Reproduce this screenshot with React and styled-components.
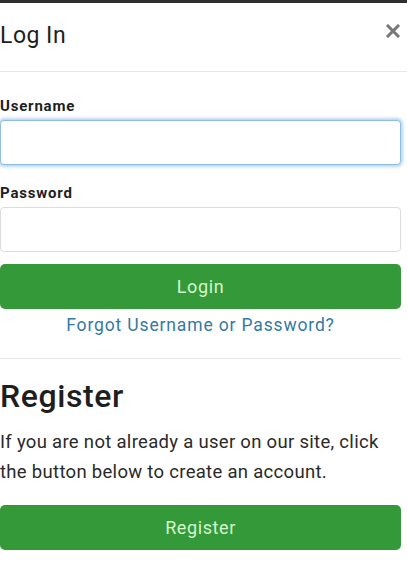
import React from "react";
import styled, { createGlobalStyle } from "styled-components";

const Global = createGlobalStyle`
  html, body { margin: 0; padding: 0; background: #ffffff; }
  body { font-family: Roboto, "Liberation Sans", Arial, sans-serif; color: #222; }
  * { box-sizing: border-box; }
`;

const TopBar = styled.div`
  height: 3px;
  background: #2e2e2e;
`;

const Header = styled.div`
  display: flex;
  align-items: center;
  justify-content: space-between;
  height: 69px;
  border-bottom: 1px solid #e4e8ea;
  padding: 0 7px 4px 0;
`;

const Title = styled.h1`
  margin: 0;
  font-size: 23px;
  font-weight: 400;
  letter-spacing: 0.5px;
  color: #1e1e1e;
  line-height: 1;
`;

const Close = styled.button`
  border: 0;
  background: none;
  padding: 0;
  width: 14px;
  height: 14px;
  display: flex;
  margin-bottom: 8px;
  cursor: pointer;
`;

const Body = styled.div`
  display: flex;
  flex-direction: column;
  padding: 24px 6px 0 0;
`;

const Label = styled.label`
  font-size: 15px;
  font-weight: 700;
  letter-spacing: 0.8px;
  color: #1e1e1e;
  line-height: 20px;
  margin-bottom: 4px;
`;

const Input = styled.input`
  height: 45px;
  width: 100%;
  border: 1px solid ${(p) => (p.$focused ? "#8fbfe0" : "#dcdcdc")};
  border-radius: 4px;
  background: #fff;
  box-shadow: ${(p) =>
    p.$focused ? "0 0 3px 2px rgba(130,180,220,0.55)" : "none"};
  margin-bottom: ${(p) => p.$gap}px;
  outline: none;
  font-size: 16px;
`;

const Button = styled.button`
  height: 45px;
  width: 100%;
  border: 0;
  border-radius: 5px;
  background: #349a39;
  color: #d6f6cc;
  font-family: inherit;
  font-size: 18px;
  letter-spacing: 0.6px;
  font-weight: 400;
  cursor: pointer;
`;

const Link = styled.a`
  display: block;
  text-align: center;
  color: #3479a6;
  font-size: 17.5px;
  letter-spacing: 0.85px;
  line-height: 20px;
  margin-top: 6px;
  text-decoration: none;
`;

const Divider = styled.hr`
  border: 0;
  border-top: 1px solid #eaeaea;
  margin: 23px 0 0 0;
`;

const Heading = styled.h2`
  margin: 19px 0 0 0;
  font-size: 32px;
  font-weight: 500;
  letter-spacing: 0.6px;
  color: #1e1e1e;
  line-height: 36px;
`;

const Text = styled.p`
  margin: 13px 0 18px 0;
  font-size: 18.5px;
  letter-spacing: 0.3px;
  line-height: 30px;
  color: #2a2a2a;
`;

export default function App() {
  return (
    <>
      <Global />
      <TopBar />
      <Header>
        <Title>Log In</Title>
        <Close aria-label="Close">
          <svg width="14" height="14" viewBox="0 0 14 14">
            <path d="M2 2 L12 12 M12 2 L2 12" stroke="#777" strokeWidth="3" strokeLinecap="square" />
          </svg>
        </Close>
      </Header>
      <Body>
        <Label>Username</Label>
        <Input $focused $gap={18} />
        <Label>Password</Label>
        <Input $gap={12} type="password" />
        <Button>Login</Button>
        <Link href="#">Forgot Username or Password?</Link>
        <Divider />
        <Heading>Register</Heading>
        <Text>
          If you are not already a user on our site, click the button below to
          create an account.
        </Text>
        <Button>Register</Button>
      </Body>
    </>
  );
}
